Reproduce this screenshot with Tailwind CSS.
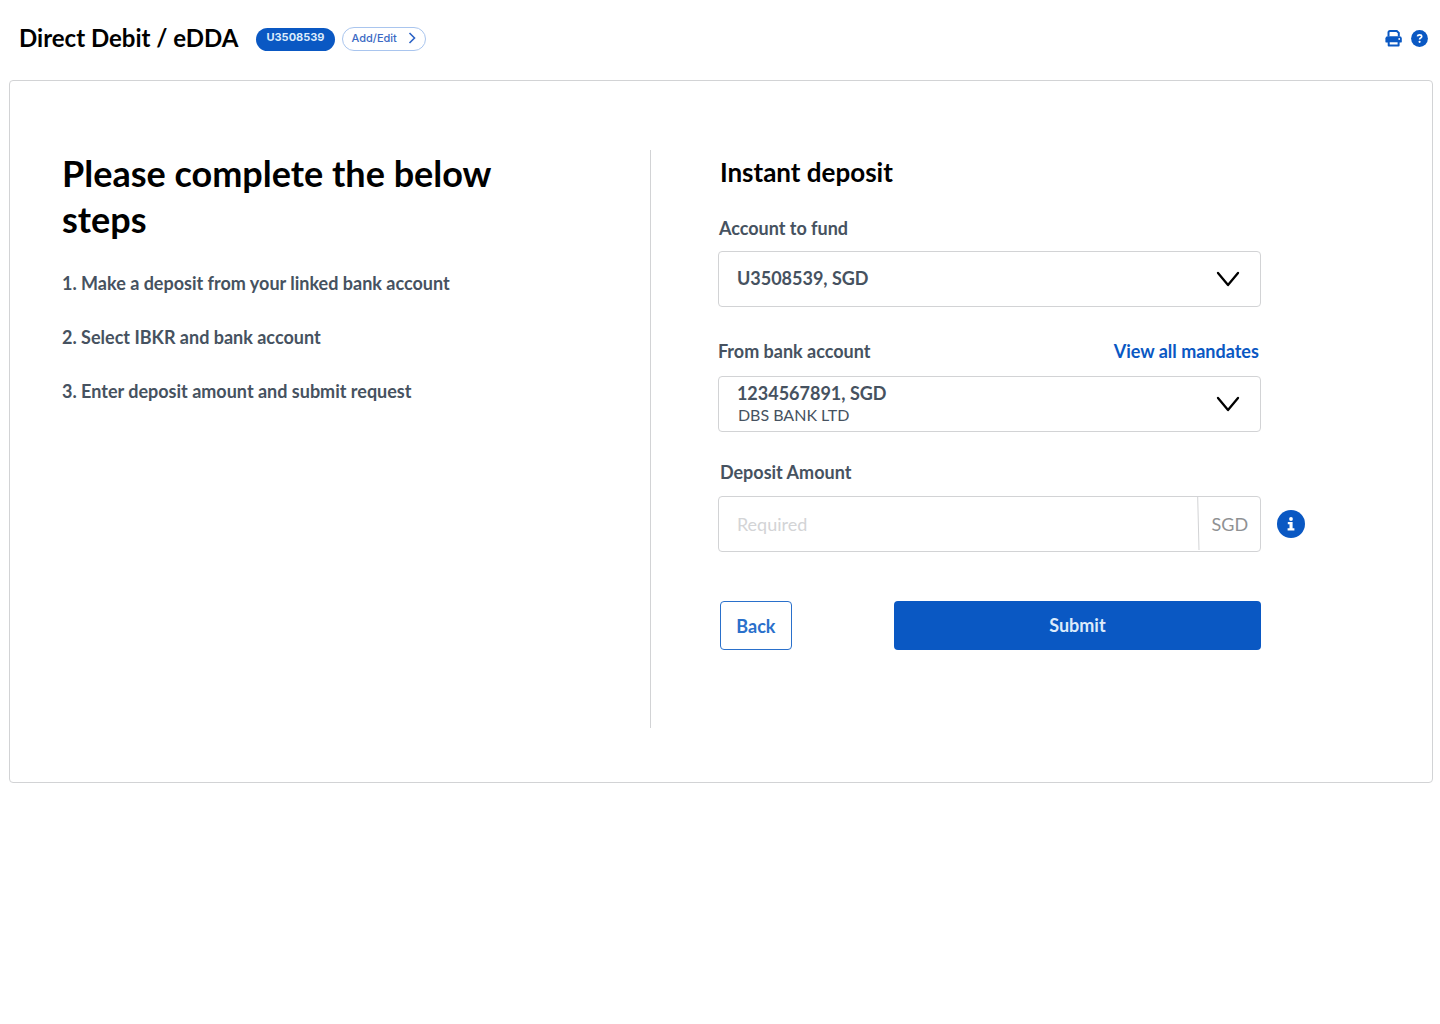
<!DOCTYPE html>
<html lang="en">
<head>
<meta charset="utf-8">
<meta name="viewport" content="width=device-width, initial-scale=1">
<title>Direct Debit / eDDA</title>
<script src="https://cdn.jsdelivr.net/npm/@tailwindcss/browser@4"></script>
</head>
<body class="min-h-screen bg-white font-['Lato',sans-serif] text-[#465260]">
<header class="flex h-20 items-center justify-between pr-3 pb-1 pl-[19px]">
  <div class="flex items-center">
    <h1 class="text-2xl leading-8 font-bold text-black">Direct Debit / eDDA</h1>
    <button type="button" class="mt-0.5 ml-[18px] h-[23px] rounded-full bg-[#0a58c3] px-[10px] pb-1 font-['Inter',sans-serif] text-[11px] leading-4 font-bold text-[#dcebfb]">U3508539</button>
    <button type="button" class="mt-0.5 ml-[7px] flex h-6 w-[84px] items-center justify-between rounded-full border border-[#a9c5ee] px-[9px] pb-0.5 font-['Inter',sans-serif] text-[11px] leading-4 font-medium text-[#3a69c4]">Add/Edit
      <svg class="h-3 w-2" viewBox="0 0 8 12" fill="none" stroke="#2c63c6" stroke-width="1.6" aria-hidden="true"><path d="M1.5 1 6.5 6 1.5 11"/></svg>
    </button>
  </div>
  <div class="flex items-center gap-[9px]">
    <button type="button" aria-label="Print">
      <svg class="block size-[17px]" viewBox="0 0 17 17" aria-hidden="true">
        <path d="M3.5 6.5V2.6Q3.5 1.1 5 1.1H11.8L13.8 2.9V6.5" fill="none" stroke="#0a58c3" stroke-width="2"/>
        <path d="M2.8 6.2H14.4Q16.8 6.2 16.8 8.6V11.4Q16.8 12.6 15.6 12.6H1.6Q.4 12.6 .4 11.4V8.6Q.4 6.2 2.8 6.2Z" fill="#0a58c3"/>
        <path d="M3.7 11.2H13.6V15.4H3.7Z" fill="#fff" stroke="#0a58c3" stroke-width="2" stroke-linejoin="round"/>
        <circle cx="14.2" cy="9" r=".9" fill="#fff"/>
      </svg>
    </button>
    <button type="button" aria-label="Help">
      <svg class="block size-[17px]" viewBox="0 0 17 17" fill="none" aria-hidden="true">
        <circle cx="8.5" cy="8.5" r="8.4" fill="#0a58c3"/>
        <path d="M6.4 6.4Q6.7 4.9 8.6 4.9Q10.7 4.9 10.7 6.5Q10.7 7.4 9.6 8Q8.6 8.6 8.6 9.5" stroke="#fff" stroke-width="1.7"/>
        <circle cx="8.6" cy="11.8" r="1.1" fill="#fff"/>
      </svg>
    </button>
  </div>
</header>

<main class="pr-[7px] pl-[9px]">
  <div class="flex rounded border border-[#d2d3d5] pt-[69px] pb-[54px]">
    <section class="w-[45%] pr-16 pl-[52px]">
      <h2 class="max-w-[480px] text-4xl leading-[46px] font-bold text-black">Please complete the below steps</h2>
      <ol class="mt-[29px] flex flex-col gap-[30px] text-lg leading-6 font-bold">
        <li>1. Make a deposit from your linked bank account</li>
        <li>2. Select IBKR and bank account</li>
        <li>3. Enter deposit amount and submit request</li>
      </ol>
    </section>

    <section class="min-h-[578px] flex-1 border-l border-[#d2d3d5] pr-12 pl-[67px]">
      <h2 class="pt-1.5 pl-0.5 text-[26px] leading-8 font-bold text-black">Instant deposit</h2>
      <form class="mt-7 grid grid-cols-[minmax(0,543px)_28px] items-center gap-x-4 text-lg leading-6 font-bold">
        <label for="fund" class="pl-px">Account to fund</label>
        <div class="col-start-1 mt-[11px] grid items-center">
          <select id="fund" class="col-start-1 row-start-1 h-14 w-full appearance-none rounded border border-[#d2d3d5] bg-white pr-16 pb-0.5 pl-[18px]">
            <option>U3508539, SGD</option>
          </select>
          <svg class="pointer-events-none col-start-1 row-start-1 mr-[21px] h-4 w-6 justify-self-end" viewBox="0 0 24 16" fill="none" stroke="#000" stroke-width="2.3" stroke-linecap="round" stroke-linejoin="round" aria-hidden="true"><path d="M2 2 12 14 22 2"/></svg>
        </div>

        <div class="col-start-1 mt-8 flex items-center justify-between">
          <label for="bank">From bank account</label>
          <a href="#" class="pr-0.5 text-[#0a58c3]">View all mandates</a>
        </div>
        <div class="col-start-1 mt-[13px] grid items-center">
          <select id="bank" aria-describedby="bank-name" class="col-start-1 row-start-1 h-14 w-full appearance-none rounded border border-[#d2d3d5] bg-white pr-16 pb-[22px] pl-[18px]">
            <option>1234567891, SGD</option>
          </select>
          <span id="bank-name" class="pointer-events-none col-start-1 row-start-1 self-end pb-[7px] pl-5 text-base leading-5 font-normal">DBS BANK LTD</span>
          <svg class="pointer-events-none col-start-1 row-start-1 mr-[21px] h-4 w-6 justify-self-end" viewBox="0 0 24 16" fill="none" stroke="#000" stroke-width="2.3" stroke-linecap="round" stroke-linejoin="round" aria-hidden="true"><path d="M2 2 12 14 22 2"/></svg>
        </div>

        <label for="amount" class="col-start-1 mt-7 pl-0.5">Deposit Amount</label>
        <div class="col-start-1 mt-3 flex h-14 rounded border border-[#d2d3d5] font-normal">
          <input id="amount" type="text" inputmode="decimal" placeholder="Required" class="min-w-0 flex-1 pl-[18px] placeholder:text-[#d3d4d6]">
          <svg class="h-[53px] w-[3px]" viewBox="0 0 3 53" stroke="#d2d3d5" aria-hidden="true"><path d="M.7 0 2 53"/></svg>
          <span class="flex w-[60px] items-center justify-center text-[#8f9193]">SGD</span>
        </div>
        <button type="button" aria-label="About deposit amounts" class="mt-3">
          <svg class="block size-7" viewBox="0 0 28 28" aria-hidden="true">
            <circle cx="14" cy="14" r="14" fill="#0a58c3"/>
            <circle cx="14" cy="9" r="1.9" fill="#fff"/>
            <path d="M10.8 12H15.6V18.2H17.4V20.6H10.6V18.2H12.5V14.3H10.8Z" fill="#fff"/>
          </svg>
        </button>

        <div class="col-start-1 mt-[49px] flex items-center justify-between pl-0.5">
          <button type="button" class="h-[49px] w-[72px] rounded border border-[#2a70cb] bg-white text-[#2a70cb]">Back</button>
          <button type="submit" class="h-[49px] w-[367px] rounded bg-[#0a58c3] pb-0.5 text-[#dcebfb]">Submit</button>
        </div>
      </form>
    </section>
  </div>
</main>
</body>
</html>
